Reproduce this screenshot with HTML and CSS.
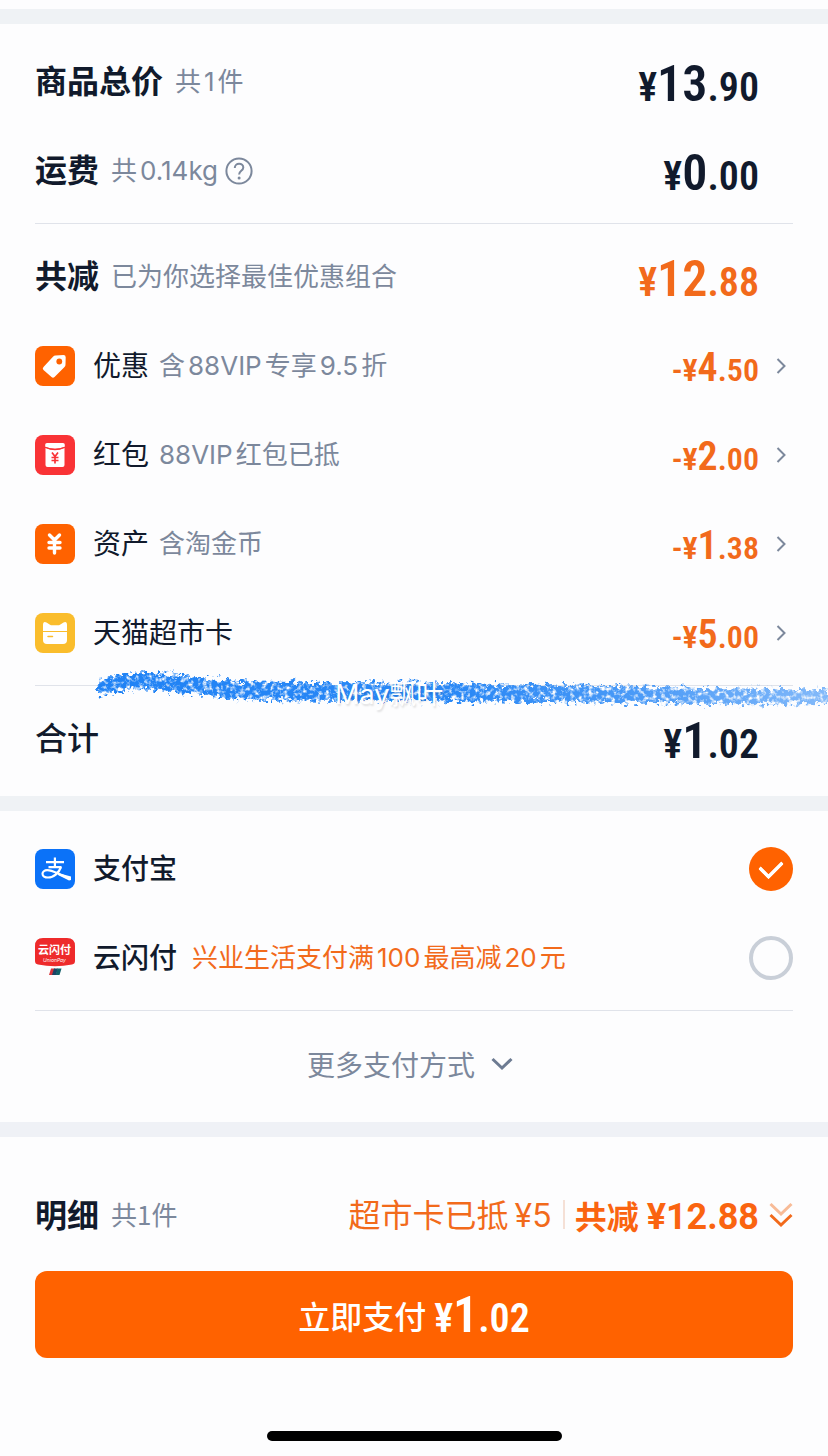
FILE: index.html
```html
<!DOCTYPE html>
<html lang="zh-CN">
<head>
    <meta charset="UTF-8">
    <meta name="viewport" content="width=device-width, initial-scale=1.0">
    <title>确认订单</title>
    <link rel="stylesheet" href="styles.css">
</head>
<body>
    <main class="page">
        <section class="card">
            <div class="group">
                <div class="row">
                    <h2>商品总价</h2>
                    <span class="note">共<span class="num">1</span>件</span>
                    <span class="price"><small>¥</small>13<small>.90</small></span>
                </div>
                <div class="row">
                    <h2>运费</h2>
                    <span class="note">共<span class="num">0.14kg</span></span>
                    <button class="help" aria-label="运费说明">
                        <svg width="28" height="28" viewBox="0 0 28 28"><circle cx="14" cy="14" r="12.6"/><path d="M9.8 11c0-2.600 1.900-4.300 4.300-4.300s4.200 1.600 4.200 3.800c0 3.300-4.200 3.400-4.200 7"/><circle class="dot" cx="14.1" cy="21" r="1.5"/></svg>
                    </button>
                    <span class="price"><small>¥</small>0<small>.00</small></span>
                </div>
            </div>
            <div class="group">
                <div class="row">
                    <h2>共减</h2>
                    <span class="note">已为你选择最佳优惠组合</span>
                    <span class="price orange"><small>¥</small>12<small>.88</small></span>
                </div>
                <button class="row item">
                    <svg class="icon" viewBox="0 0 40 40"><rect width="40" height="40" rx="8" fill="#ff6200"/><path d="M20.5 9.5 28.5 9q2.200 0 2.200 2.200L30.500 18.500q0 1.500-1 2.500L19.500 31q-1.500 1.500-3 0L8.500 24q-1.500-1.500 0-3L18 10.700q1-1.100 2.500-1.200z" fill="#fff"/><circle cx="24.300" cy="15.500" r="2.900" fill="#ff6200"/></svg>
                    <span class="name">优惠</span>
                    <span class="note">含<span class="num">88VIP</span>专享<span class="num">9.5</span>折</span>
                    <span class="price orange small"><small>-¥</small>4<small>.50</small></span>
                    <svg class="arrow" viewBox="0 0 10 16"><path d="m1.500 1 7 7-7 7"/></svg>
                </button>
                <button class="row item">
                    <svg class="icon" viewBox="0 0 40 40"><rect width="40" height="40" rx="8" fill="#f93336"/><path d="M10.500 13q9.500 4.500 19 0V30q0 2-2 2h-15q-2 0-2-2z" fill="#fff"/><path d="M12 8h16q1.800 0 1.800 1.800v2q-9.800 4-19.600 0v-2Q10.200 8 12 8z" fill="#fff"/><path d="M10.200 12.300q9.800 4 19.600 0" fill="none" stroke="#f93336"/><path d="m17 17.500 3 4 3-4M16.500 22.500h7M16.500 25.500h7M20 22v6.500" fill="none" stroke="#f93336" stroke-width="1.700"/></svg>
                    <span class="name">红包</span>
                    <span class="note"><span class="num first">88VIP</span>红包已抵</span>
                    <span class="price orange small"><small>-¥</small>2<small>.00</small></span>
                    <svg class="arrow" viewBox="0 0 10 16"><path d="m1.500 1 7 7-7 7"/></svg>
                </button>
                <button class="row item">
                    <svg class="icon" viewBox="0 0 40 40"><rect width="40" height="40" rx="8" fill="#ff6200"/><path d="m14.500 11 5 5 5-5M14 18.500h11M14 24h11M19.500 17v12" fill="none" stroke="#fff" stroke-width="3.400" stroke-linecap="round"/></svg>
                    <span class="name">资产</span>
                    <span class="note">含淘金币</span>
                    <span class="price orange small"><small>-¥</small>1<small>.38</small></span>
                    <svg class="arrow" viewBox="0 0 10 16"><path d="m1.500 1 7 7-7 7"/></svg>
                </button>
                <button class="row item">
                    <svg class="icon" viewBox="0 0 40 40"><rect width="40" height="40" rx="8" fill="#fabd2c"/><path d="M8 12q0-4 3.500-2.500l3.500 2.300q1 .5 2 .5h6q1 0 2-.5l3.500-2.300Q32 8 32 12v6H8z" fill="#fff"/><path d="M8 19h24v8q0 4-4 4H12q-4 0-4-4z" fill="#fff"/><path d="M13 23.500h4.500" stroke="#fabd2c" stroke-width="1.500" stroke-linecap="round"/></svg>
                    <span class="name">天猫超市卡</span>
                    <span class="price orange small"><small>-¥</small>5<small>.00</small></span>
                    <svg class="arrow" viewBox="0 0 10 16"><path d="m1.500 1 7 7-7 7"/></svg>
                </button>
            </div>
            <div class="group total">
                <div class="row">
                    <h2 class="medium">合计</h2>
                    <span class="price"><small>¥</small>1<small>.02</small></span>
                </div>
                <!-- crayon underline -->
                <svg class="brush" viewBox="0 0 740 50" preserveAspectRatio="none">
                    <defs>
                        <linearGradient id="fade" gradientUnits="userSpaceOnUse" x1="0" y1="0" x2="740" y2="0">
                            <stop offset="0" stop-color="#1f82f5"/>
                            <stop offset=".5" stop-color="#1f82f5" stop-opacity=".95"/>
                            <stop offset=".75" stop-color="#1f82f5" stop-opacity=".8"/>
                            <stop offset="1" stop-color="#1f82f5" stop-opacity=".55"/>
                        </linearGradient>
                        <filter id="crayon" filterUnits="userSpaceOnUse" x="0" y="0" width="740" height="50" color-interpolation-filters="sRGB">
                            <feTurbulence type="fractalNoise" baseFrequency=".22" numOctaves="3" seed="4" result="noise"/>
                            <feDisplacementMap in="SourceGraphic" in2="noise" scale="15" xChannelSelector="R" yChannelSelector="G" result="rough"/>
                            <feColorMatrix in="noise" type="matrix" values="0 0 0 0 0  0 0 0 0 0  0 0 0 0 0  0 0 3 0 -.600" result="holes"/>
                            <feComposite in="rough" in2="holes" operator="in" result="grain"/>
                            <feGaussianBlur in="grain" stdDeviation=".5"/>
                        </filter>
                    </defs>
                    <path d="M6 28Q6 20 15 14Q28 9 55 9Q90 9 112 15Q150 18 230 18Q400 19 560 23Q650 25 740 25V40Q650 41 560 39Q400 37 300 37Q200 37 145 35Q110 29 85 28Q60 24 30 26Q14 34 6 28Z" fill="url(#fade)" filter="url(#crayon)"/>
                </svg>
                <span class="watermark">May飘叶</span>
            </div>
        </section>

        <section class="card">
            <div class="group">
                <label class="row">
                    <svg class="icon" viewBox="0 0 40 40"><rect width="40" height="40" rx="8" fill="#0b72f8"/><g fill="none" stroke="#fff"><path d="M11 13.200h18M19.900 8.500v9M13.500 18.200h13" stroke-width="2.200"/><path d="M26 18c-2 5.500-7 10.500-13 10.500-3.200 0-5.500-1.500-5.500-3.700 0-2 2-3.600 4.700-3.600 4.800 0 9.800 3.200 18 6.300" stroke-width="2.200"/></g><path d="m23 24 13 3.500v3.500l-2 .5-11-5.500z" fill="#fff"/></svg>
                    <span class="name medium">支付宝</span>
                    <input class="radio" type="radio" name="pay" checked>
                </label>
                <label class="row">
                    <svg class="icon" viewBox="0 0 40 40"><path d="M8 0h24q8 0 8 8v15q0 3-3 3.500Q20 30 3 26.500q-3-.5-3-3.500V8q0-8 8-8z" fill="#ee2a2b"/><text class="union" x="19.500" y="16" text-anchor="middle">云闪付</text><text class="union-en" x="19.500" y="23.500" text-anchor="middle">UnionPay</text><path d="M16 30.500h4l-2 6.500h-4z" fill="#d8343a"/><path d="M19 30.500h4L21 37h-4z" fill="#1c4467"/><path d="M22.500 30.500h4l-2 6.500h-4z" fill="#12616a"/></svg>
                    <span class="name medium">云闪付</span>
                    <span class="note orange promo">兴业生活支付满<span class="num">100</span>最高减<span class="num">20</span>元</span>
                    <input class="radio" type="radio" name="pay">
                </label>
            </div>
            <div class="group">
                <button class="more">更多支付方式
                    <svg width="22" height="14" viewBox="0 0 22 14"><path d="m1.500 2 9.500 9 9.500-9"/></svg>
                </button>
            </div>
        </section>

        <footer class="footer">
            <div class="row">
                <h2>明细</h2>
                <span class="note">共1件</span>
                <button class="saved">
                    <span class="card-used">超市卡已抵<span class="num">¥5</span></span>
                    <strong>共减<span class="num">¥12.88</span></strong>
                    <svg width="24" height="26" viewBox="0 0 24 26"><path d="m1.500 2 10.500 10L22.500 2" opacity=".45"/><path d="m1.500 13 10.500 10 10.500-10"/></svg>
                </button>
            </div>
            <button class="pay">立即支付<span class="price"><small>¥</small>1<small>.02</small></span></button>
            <div class="home-bar"></div>
        </footer>
    </main>
</body>
</html>
```
FILE: styles.css
```css
* { box-sizing: border-box; }
body { margin: 0; font-family: "Noto Sans CJK SC", sans-serif; background: #fdfdfe; color: #111a2c; }
button { padding: 0; border: none; background: none; font: inherit; color: inherit; text-align: left; cursor: pointer; }
h2 { margin: 0; padding-bottom: 6px; font-size: 32px; font-weight: 700; }
.medium { font-weight: 500; }
.page { padding-top: 9px; }

.card { border-top: 15px solid #eff2f5; padding: 5px 35px; }
.group { padding: 8px 0; }
.group + .group { border-top: 1px solid #e0e3ea; }
.row { display: flex; align-items: center; width: 100%; height: 89px; white-space: nowrap; }
.icon { width: 40px; height: 40px; margin-right: 18px; flex: none; }
.name { padding-bottom: 4px; font-size: 28px; }
.note { margin-left: 12px; padding-bottom: 4px; font-size: 26px; color: #7c889c; }
.item .note { margin-left: 10px; }
.num { font-family: Inter, sans-serif; margin: 0 3px; }
.num.first { margin-left: 0; }
.orange, .note.orange { color: #f26a1b; }

.price { margin-left: auto; margin-right: 34px; padding-top: 8px; font-family: "Liberation Sans Narrow", "Roboto Condensed", Roboto, sans-serif; font-size: 50px; font-weight: 600; line-height: 56px; }
.price small { font-size: 40px; }
.price.small { font-size: 40px; }
.price.small small { font-size: 32px; }
.item .price { margin-right: 17px; padding-top: 6px; }
.arrow { width: 10px; height: 16px; margin-right: 7px; fill: none; stroke: #7c889c; stroke-width: 2; }

.help { display: flex; margin-left: 4px; }
.help svg { fill: none; stroke: #7c889c; stroke-width: 2; }
.help .dot { fill: #7c889c; stroke: none; }

.total { position: relative; }
.brush { position: absolute; left: 55px; top: -22px; width: calc(100% - 20px); height: 50px; pointer-events: none; }
.watermark { position: absolute; left: 300px; top: -10px; font-family: Inter, "Noto Sans CJK SC", sans-serif; font-size: 27px; line-height: 38px; color: #fff; text-shadow: 1px 2px 2px rgba(0, 0, 0, .12); }

.union { font-size: 11px; font-weight: 700; fill: #fff; }
.union-en { font-family: Inter, sans-serif; font-size: 5px; font-style: italic; fill: #fff; }
.promo { margin-left: 15px; }
.radio { appearance: none; width: 44px; height: 44px; margin: 0 0 0 auto; border: 4px solid #c9cfd8; border-radius: 50%; }
.radio:checked { display: grid; place-items: center; border: none; background: #ff6200; }
.radio:checked::after { content: ""; width: 18px; height: 11px; margin-bottom: 5px; border: solid #fff; border-width: 0 0 4px 4px; border-radius: 2px; transform: rotate(-45deg); }
.more { display: flex; align-items: center; justify-content: center; gap: 16px; width: 100%; height: 90px; padding-right: 8px; font-size: 28px; color: #7c889c; }
.more svg { fill: none; stroke: #6d7b92; stroke-width: 3; }

.footer { border-top: 15px solid #eff1f6; padding: 34px 35px 15px; }
.saved { display: flex; align-items: center; margin-left: auto; padding-bottom: 2px; font-size: 32px; color: #f26a1b; }
.saved strong { padding-left: 10px; color: #fa6410; }
.saved strong .num { margin: 0 0 0 8px; font-family: Roboto, sans-serif; font-size: 36px; }
.card-used { border-right: 2px solid #f5e0d6; padding-right: 8px; line-height: 26px; }
.card-used .num { margin-left: 6px; }
.saved svg { margin-left: 10px; fill: none; stroke: #f26a1b; stroke-width: 3; }
.pay { display: flex; align-items: center; justify-content: center; width: 100%; height: 87px; margin-top: 11px; border-radius: 12px; background: #ff6200; font-size: 32px; font-weight: 500; color: #fff; }
.pay .price { margin: 0 0 0 8px; padding-top: 4px; }
.home-bar { width: 295px; height: 10px; margin: 73px auto 0; border-radius: 5px; background: #000; }
```
